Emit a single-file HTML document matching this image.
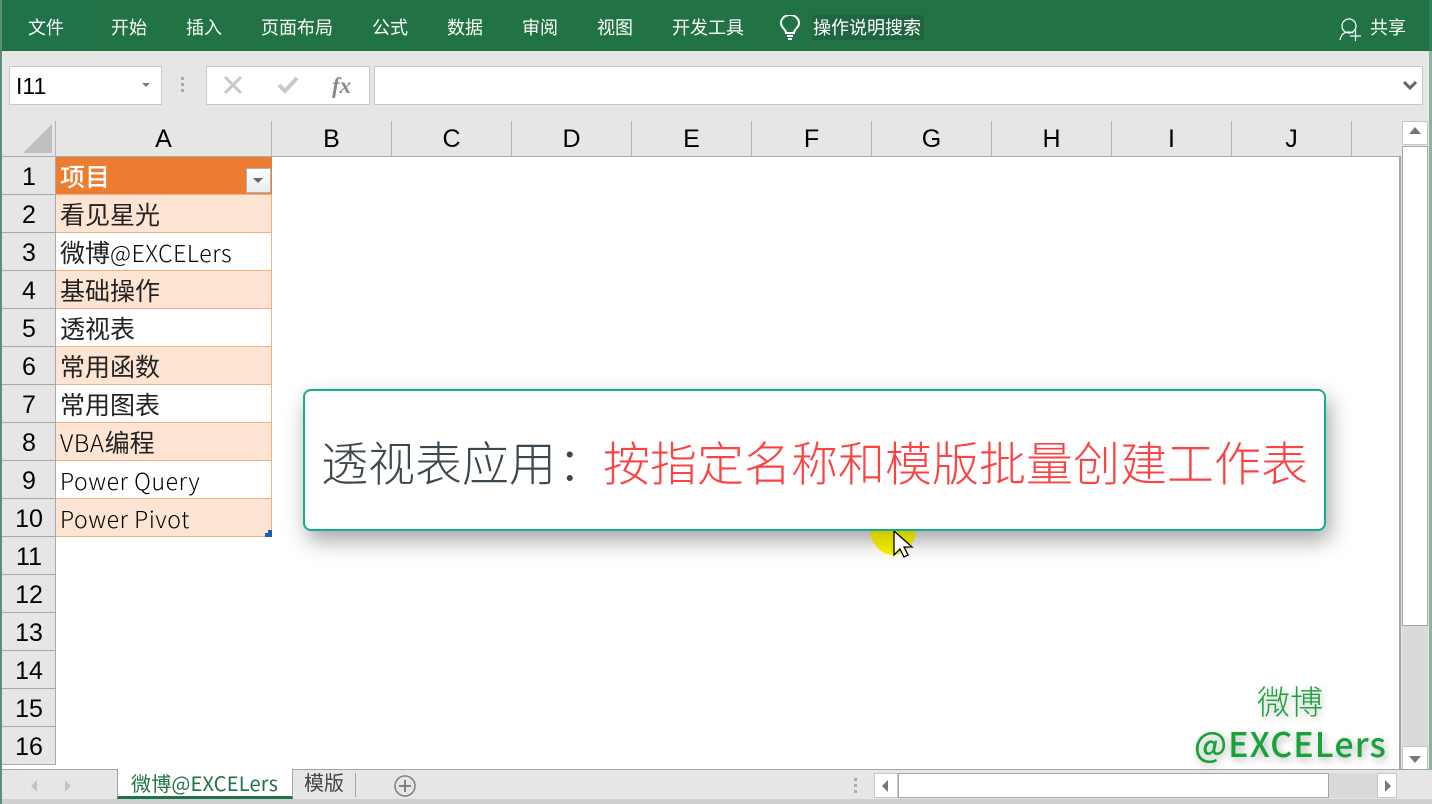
<!DOCTYPE html>
<html lang="zh"><head><meta charset="utf-8"><title>Excel</title>
<style>
html,body{margin:0;padding:0}
body{width:1432px;height:804px;overflow:hidden;position:relative;background:#e6e6e6;font-family:"Liberation Sans","Noto Sans CJK SC",sans-serif}
div,span.t{position:absolute;box-sizing:border-box}
.t{white-space:nowrap;line-height:1}
.m{font-size:18px;color:#fff;top:18px;font-family:"Noto Sans CJK SC",sans-serif}
.ch{top:121px;height:35px;border-right:1px solid #b5b5b5;font-size:25px;color:#000;text-align:center;line-height:37px}
.rh{left:2px;width:54px;height:38px;border-bottom:1px solid #a9a9a9;border-right:1px solid #a9a9a9;background:#e6e6e6;font-size:25px;color:#000;text-align:center;line-height:40px;padding-left:1px}
.c{left:56px;width:216px;height:38px;border-bottom:1px solid #f4b084;border-right:1px solid #f4b084;font:25px/38px "Noto Sans CJK SC",sans-serif;color:#222;padding-left:4px;white-space:nowrap}
.c i{font-style:normal;font-size:23px;font-weight:300;letter-spacing:.62px;color:#000}
.o{background:#fde4d3}.w{background:#fff}
</style></head><body>
<div style="left:0;top:0;width:1432px;height:51px;background:#217346"></div>
<div style="left:2px;top:0;width:90px;height:51px;background:#20724a"></div>
<span class="t m" style="left:28px">文件</span>
<span class="t m" style="left:111px">开始</span>
<span class="t m" style="left:186px">插入</span>
<span class="t m" style="left:261px">页面布局</span>
<span class="t m" style="left:372px">公式</span>
<span class="t m" style="left:447px">数据</span>
<span class="t m" style="left:522px">审阅</span>
<span class="t m" style="left:597px">视图</span>
<span class="t m" style="left:672px">开发工具</span>
<svg style="position:absolute;left:779px;top:15px" width="22" height="26" viewBox="0 0 22 26" fill="none" stroke="#fff" stroke-width="2"><path d="M7 18c0-4-5-5-5-10a9 8 0 0 1 18 0c0 5-5 6-5 10z"/><path d="M8 21h6M9 24h4"/></svg>
<div style="left:812px;top:15px;width:112px;height:25px;background:#1e6540"></div>
<span class="t m" style="left:813px">操作说明搜索</span>
<svg style="position:absolute;left:1339px;top:17px" width="24" height="24" viewBox="0 0 24 24" fill="none" stroke="#fff" stroke-width="1.2"><circle cx="10" cy="9" r="7"/><path d="M1 23c1-5 4-8 9-8 2 0 3 .5 4 1"/><path d="M11 19h11M16.500 13v11"/></svg>
<span class="t m" style="left:1370px">共享</span>

<div style="left:9px;top:66px;width:153px;height:39px;background:#fff;border:1px solid #c6c6c6"></div>
<span class="t" style="left:16px;top:75px;font-size:23px;color:#000">I11</span>
<div style="left:142px;top:83px;border:4px solid transparent;border-top:4px solid #777"></div>
<div style="left:181px;top:77px;width:3px;height:3px;background:#aaa;box-shadow:0 6px 0 #aaa,0 12px 0 #aaa"></div>
<div style="left:206px;top:66px;width:164px;height:39px;background:#fff;border:1px solid #c6c6c6"></div>
<svg style="position:absolute;left:222px;top:74px" width="80" height="22" viewBox="0 0 80 22" fill="none" stroke="#c8c8c8" stroke-width="3"><path d="M3 3l16 16M19 3L3 19"/><path d="M57 11l6 6 12-13" stroke-width="4"/></svg>
<span class="t" style="left:332px;top:73px;font:italic bold 23px 'Liberation Serif',serif;color:#8a8a8a">fx</span>
<div style="left:374px;top:66px;width:1049px;height:39px;background:#fff;border:1px solid #c6c6c6"></div>
<svg style="position:absolute;left:1403px;top:81px" width="14" height="10" viewBox="0 0 14 10"><path d="M1 1l6 6 6-6" fill="none" stroke="#666" stroke-width="3"/></svg>

<div style="left:2px;top:157px;width:1398px;height:613px;background:#fff"></div>
<div style="left:2px;top:121px;width:1398px;height:36px;border-bottom:1px solid #a9a9a9"></div>
<div style="left:55px;top:121px;width:1px;height:36px;background:#b5b5b5"></div>
<div style="left:23px;top:124px;width:0;height:0;border-left:29px solid transparent;border-bottom:29px solid #bfbfbf"></div>
<div class="ch" style="left:56px;width:216px">A</div>
<div class="ch" style="left:272px;width:120px">B</div>
<div class="ch" style="left:392px;width:120px">C</div>
<div class="ch" style="left:512px;width:120px">D</div>
<div class="ch" style="left:632px;width:120px">E</div>
<div class="ch" style="left:752px;width:120px">F</div>
<div class="ch" style="left:872px;width:120px">G</div>
<div class="ch" style="left:992px;width:120px">H</div>
<div class="ch" style="left:1112px;width:120px">I</div>
<div class="ch" style="left:1232px;width:120px">J</div>
<div style="left:1399px;top:156px;width:2px;height:614px;background:#a5a5a5"></div>

<div class="rh" style="top:157px">1</div>
<div class="rh" style="top:195px">2</div>
<div class="rh" style="top:233px">3</div>
<div class="rh" style="top:271px">4</div>
<div class="rh" style="top:309px">5</div>
<div class="rh" style="top:347px">6</div>
<div class="rh" style="top:385px">7</div>
<div class="rh" style="top:423px">8</div>
<div class="rh" style="top:461px">9</div>
<div class="rh" style="top:499px">10</div>
<div class="rh" style="top:537px">11</div>
<div class="rh" style="top:575px">12</div>
<div class="rh" style="top:613px">13</div>
<div class="rh" style="top:651px">14</div>
<div class="rh" style="top:689px">15</div>
<div class="rh" style="top:727px">16</div>

<div class="c" style="top:157px;background:#ed7d31;color:#fff;font-weight:500;border:0;border-bottom:1px solid #f4b084">项目</div>
<div style="left:246px;top:168px;width:25px;height:25px;border:1px solid #a9b4bd;background:linear-gradient(#fff,#e6ecef)"></div>
<div style="left:253px;top:178px;border:5px solid transparent;border-top:5px solid #666"></div>
<div class="c o" style="top:195px">看见星光</div>
<div class="c w" style="top:233px">微博<i>@EXCELers</i></div>
<div class="c o" style="top:271px">基础操作</div>
<div class="c w" style="top:309px">透视表</div>
<div class="c o" style="top:347px">常用函数</div>
<div class="c w" style="top:385px">常用图表</div>
<div class="c o" style="top:423px"><i style="font-size:24px">VBA</i>编程</div>
<div class="c w" style="top:461px"><i>Power Query</i></div>
<div class="c o" style="top:499px"><i>Power Pivot</i></div>
<svg style="position:absolute;left:265px;top:530px" width="7" height="7"><path d="M3 0h4v7H0V3h3z" fill="#1f5fae"/></svg>

<div style="left:303px;top:389px;width:1023px;height:142px;background:#fff;border:2px solid #16ac8e;border-radius:8px;box-shadow:4px 10px 22px rgba(0,0,0,.35)"></div>
<svg style="position:absolute;left:868px;top:531px" width="50" height="28" viewBox="0 0 50 28"><defs><linearGradient id="y" x1="0" y1="0" x2="0" y2="1"><stop offset="0" stop-color="#cfc800"/><stop offset="1" stop-color="#f4f000"/></linearGradient></defs><path d="M2 0h46a24 24 0 0 1-7 16 20 20 0 0 1-32 0A24 24 0 0 1 2 0z" fill="url(#y)"/><path d="M26 0v24l6-6 4 8 4-2-4-8h8z" fill="#fff" stroke="#000" stroke-width="1.300"/></svg>
<span class="t" style="left:321px;top:435px;font:47px/1.100 'Noto Sans CJK SC',sans-serif;font-weight:300;color:#3c4850">透视表应用</span>
<span class="t" style="left:558px;top:435px;font:47px/1.100 'Noto Sans CJK SC',sans-serif;font-weight:300;color:#3c4850">：</span>
<span class="t" style="left:603px;top:435px;font:47px/1.100 'Noto Sans CJK SC',sans-serif;font-weight:300;color:#fb4343">按指定名称和模版批量创建工作表</span>

<span class="t" style="left:1257px;top:682px;font:33px/1.100 'Noto Sans CJK SC',sans-serif;font-weight:300;color:#18a23a;text-shadow:2px 3px 8px rgba(0,0,0,.25)">微博</span>
<span class="t" style="left:1194px;top:724px;font:500 34px/1.100 'Noto Sans CJK SC',sans-serif;letter-spacing:1.1px;color:#18a23a;text-shadow:2px 3px 8px rgba(0,0,0,.3)">@EXCELers</span>

<div style="left:1402px;top:121px;width:26px;height:24px;background:#fff;border:1px solid #c6c6c6"></div>
<div style="left:1409px;top:127px;border:6px solid transparent;border-bottom:7px solid #777;border-top:0"></div>
<div style="left:1402px;top:146px;width:26px;height:480px;background:#fff;border:1px solid #a5a5a5"></div>
<div style="left:1402px;top:626px;width:26px;height:120px;background:#dadadc"></div>
<div style="left:1402px;top:746px;width:26px;height:24px;background:#fff;border:1px solid #c6c6c6"></div>
<div style="left:1409px;top:756px;border:6px solid transparent;border-top:7px solid #777;border-bottom:0"></div>
<div style="left:1429px;top:0;width:3px;height:804px;background:#3a8a68;opacity:.55"></div>

<div style="left:0;top:769px;width:1432px;height:30px;background:#e6e6e6;border-top:1px solid #a5a5a5"></div>
<div style="left:0;top:799px;width:1432px;height:5px;background:#cfcfcf"></div>
<div style="left:31px;top:780px;border:6px solid transparent;border-right:6px solid #c4c4c4;border-left:0"></div>
<div style="left:65px;top:780px;border:6px solid transparent;border-left:6px solid #c4c4c4;border-right:0"></div>
<div style="left:117px;top:769px;width:176px;height:30px;background:#fff;border-left:1px solid #a5a5a5;border-right:1px solid #a5a5a5;border-bottom:3px solid #217346"></div>
<span class="t" style="left:131px;top:771px;font:20px/1.200 'Noto Sans CJK SC',sans-serif;letter-spacing:.2px;color:#217346">微博@EXCELers</span>
<span class="t" style="left:304px;top:770px;font:20px/1.200 'Noto Sans CJK SC',sans-serif;color:#444">模版</span>
<div style="left:355px;top:773px;width:1px;height:24px;background:#a5a5a5"></div>
<svg style="position:absolute;left:393px;top:774px" width="24" height="24" viewBox="0 0 24 24" fill="none" stroke="#808080"><circle cx="12" cy="12" r="10" stroke-width="1.500"/><path d="M12 6v12M6 12h12" stroke-width="2"/></svg>
<div style="left:854px;top:778px;width:3px;height:3px;background:#aaa;box-shadow:0 6px 0 #aaa,0 12px 0 #aaa"></div>
<div style="left:874px;top:773px;width:24px;height:25px;background:#fff;border:1px solid #c6c6c6"></div>
<div style="left:882px;top:780px;border:6px solid transparent;border-right:6px solid #777;border-left:0"></div>
<div style="left:898px;top:773px;width:431px;height:25px;background:#fff;border:1px solid #a5a5a5"></div>
<div style="left:1329px;top:773px;width:48px;height:25px;background:#dadadc"></div>
<div style="left:1377px;top:773px;width:20px;height:25px;background:#fff;border:1px solid #c6c6c6"></div>
<div style="left:1385px;top:780px;border:6px solid transparent;border-left:6px solid #777;border-right:0"></div>
<div style="left:0;top:0;width:2px;height:804px;background:#5a8f78"></div>
</body></html>
